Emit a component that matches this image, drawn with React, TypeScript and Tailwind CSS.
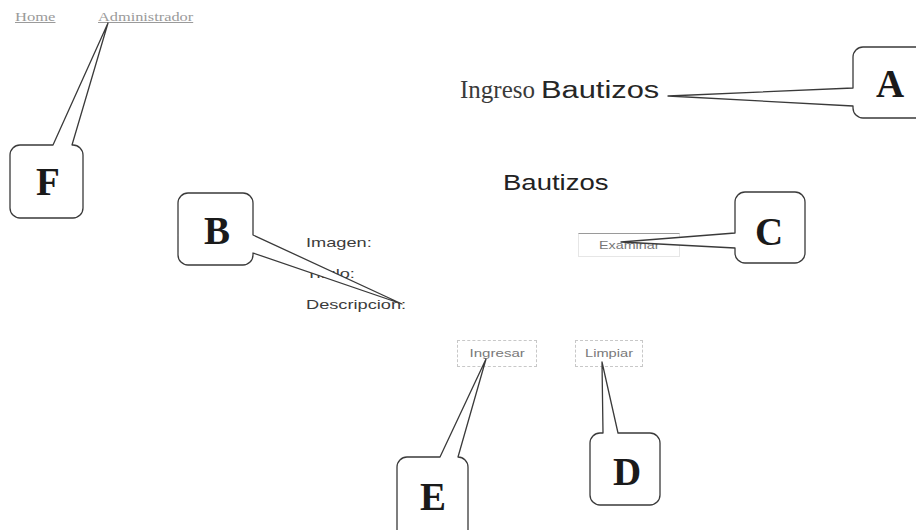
import React from "react";

type Side = "top" | "left" | "right";

type Callout = {
    letter: string;
    x: number;
    y: number;
    w: number;
    h: number;
    side: Side;
    b1: number;
    b2: number;
    tip: [number, number];
    lx: number;
    ly: number;
};

const callouts: Callout[] = [
    { letter: "A", x: 853, y: 47, w: 80, h: 71, side: "left", b1: 88, b2: 106, tip: [668, 96], lx: 890, ly: 97 },
    { letter: "F", x: 10, y: 145, w: 73, h: 73, side: "top", b1: 53, b2: 72, tip: [108, 23], lx: 48, ly: 195 },
    { letter: "B", x: 178, y: 193, w: 75, h: 72, side: "right", b1: 235, b2: 253, tip: [402, 304], lx: 217, ly: 244 },
    { letter: "C", x: 735, y: 192, w: 70, h: 71, side: "left", b1: 233, b2: 248, tip: [621, 242], lx: 769, ly: 245 },
    { letter: "D", x: 590, y: 433, w: 70, h: 72, side: "top", b1: 603, b2: 618, tip: [602, 362], lx: 627, ly: 485 },
    { letter: "E", x: 397, y: 457, w: 71, h: 90, side: "top", b1: 440, b2: 458, tip: [486, 359], lx: 433, ly: 510 },
];

function calloutPath(c: Callout) {
    const r = 10;
    const { x, y, w, h, side, b1, b2 } = c;
    const [tx, ty] = c.tip;
    let d = `M ${x + r} ${y} `;
    if (side === "top") d += `L ${b1} ${y} L ${tx} ${ty} L ${b2} ${y} `;
    d += `L ${x + w - r} ${y} A ${r} ${r} 0 0 1 ${x + w} ${y + r} `;
    if (side === "right") d += `L ${x + w} ${b1} L ${tx} ${ty} L ${x + w} ${b2} `;
    d += `L ${x + w} ${y + h - r} A ${r} ${r} 0 0 1 ${x + w - r} ${y + h} `;
    d += `L ${x + r} ${y + h} A ${r} ${r} 0 0 1 ${x} ${y + h - r} `;
    if (side === "left") d += `L ${x} ${b2} L ${tx} ${ty} L ${x} ${b1} `;
    d += `L ${x} ${y + r} A ${r} ${r} 0 0 1 ${x + r} ${y} Z`;
    return d;
}

const sans = "font-['Liberation_Sans',Arial,sans-serif]";
const serif = "font-['Liberation_Serif','Times_New_Roman',serif]";

export default function App() {
    return (
        <div className="relative w-[916px] h-[530px] overflow-hidden bg-white">
            {/* page links */}
            <nav className={`flex pt-[11px] pl-[15px] text-[12px] leading-[12px] text-[#9a9a9a] ${serif}`}>
                <a className="w-[83px]"><span className="inline-block origin-left scale-x-[1.38] underline">Home</span></a>
                <a><span className="inline-block origin-left scale-x-[1.36] underline">Administrador</span></a>
            </nav>

            <h1 className={`mt-[54px] pl-[460px] text-[25px] leading-[25px] text-[#3a3a3a] ${serif}`}>
                Ingreso{" "}
                <span className={`inline-block origin-left scale-x-[1.34] text-[23px] leading-[23px] text-[#262626] ${sans}`}>Bautizos</span>
            </h1>

            <h2 className={`mt-[70px] pl-[503px] text-[22px] leading-[22px] text-[#222] ${sans}`}>
                <span className="inline-block origin-left scale-x-[1.25]">Bautizos</span>
            </h2>

            <form className={`mt-[33px] ${sans} text-[13px] leading-[31px] text-[#3c3c3c]`}>
                <div className="flex pl-[306px]">
                    <label className="w-[272px]"><span className="inline-block origin-left scale-x-[1.4]">Imagen:</span></label>
                    <button type="button" className="mt-[6px] flex h-[24px] w-[102px] items-center justify-center border border-[#e6e6e6] border-t-[#9a9a9a] text-[11px] leading-none text-[#777]">
                        <span className="inline-block scale-x-[1.3]">Examinar</span>
                    </button>
                </div>
                <div className="pl-[306px]">
                    <label><span className="inline-block origin-left scale-x-[1.4]">Titulo:</span></label>
                </div>
                <div className="pl-[306px]">
                    <label><span className="inline-block origin-left scale-x-[1.4]">Descripcion:</span></label>
                </div>
                <div className="mt-[20px] flex gap-[38px] pl-[457px]">
                    <button type="button" className="flex h-[27px] w-[80px] items-center justify-center border border-dashed border-[#c8c8c8] text-[11px] leading-none text-[#7a7a7a]">
                        <span className="inline-block scale-x-[1.37]">Ingresar</span>
                    </button>
                    <button type="button" className="flex h-[27px] w-[68px] items-center justify-center border border-dashed border-[#c8c8c8] text-[11px] leading-none text-[#7a7a7a]">
                        <span className="inline-block scale-x-[1.33]">Limpiar</span>
                    </button>
                </div>
            </form>

            {/* annotation callouts over the page */}
            <svg className="pointer-events-none absolute left-0 top-0" width="916" height="530" viewBox="0 0 916 530">
                {callouts.map((c) => (
                    <g key={c.letter}>
                        <path d={calloutPath(c)} fill="white" stroke="#3a3a3a" strokeWidth="1.3" strokeLinejoin="round" />
                        <text
                            x={c.lx}
                            y={c.ly}
                            textAnchor="middle"
                            fontFamily="'Liberation Serif', 'Times New Roman', serif"
                            fontWeight="bold"
                            fontSize="39"
                            fill="#1a1a1a"
                        >
                            {c.letter}
                        </text>
                    </g>
                ))}
            </svg>
        </div>
    );
}
